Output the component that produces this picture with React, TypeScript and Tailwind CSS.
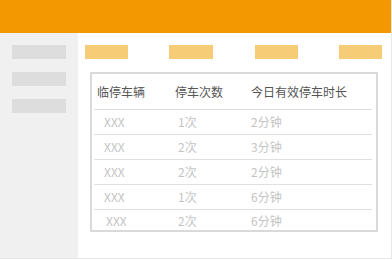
const rows = [
  { car: 'XXX', count: '1次', time: '2分钟' },
  { car: 'XXX', count: '2次', time: '3分钟' },
  { car: 'XXX', count: '2次', time: '2分钟' },
  { car: 'XXX', count: '1次', time: '6分钟' },
  { car: 'XXX', count: '2次', time: '6分钟' },
];

const font = { fontFamily: '"Noto Sans CJK SC", "Noto Sans", sans-serif' };

export default function App() {
  return (
    <div className="w-[392px] h-[260px] bg-white" style={font}>
      <div className="w-[392px] h-[259px] flex flex-col border-r border-b border-[#e8e8e8]">
        <div className="h-[33px] bg-[#f39800] shrink-0" />
        <div className="flex flex-1">
          <aside className="w-[78px] bg-[#f0f0f0] flex flex-col gap-[13px] pt-[12px] px-[12px]">
            <div className="h-[14px] bg-[#dddddd]" />
            <div className="h-[14px] bg-[#dddddd]" />
            <div className="h-[14px] bg-[#dddddd]" />
          </aside>
          <main className="flex-1 pt-[12px]">
            <div className="flex justify-between pl-[7px] pr-[9px]">
              <div className="w-[43px] h-[14px] bg-[#f7cc77]" />
              <div className="w-[44px] h-[14px] bg-[#f7cc77]" />
              <div className="w-[43px] h-[14px] bg-[#f7cc77]" />
              <div className="w-[43px] h-[14px] bg-[#f7cc77]" />
            </div>
            <div className="mt-[13px] ml-[12px] w-[288px] h-[160px] border-2 border-[#dadada]">
              <div className="ml-[2px] mr-[4px]">
                <div className="grid grid-cols-[81px_76px_1fr] items-center h-[36px] border-b border-[#dcdcdc] text-[12px] text-[#555555]">
                  <span className="pl-[3px]">临停车辆</span>
                  <span>停车次数</span>
                  <span>今日有效停车时长</span>
                </div>
                {rows.map((r, i) => (
                  <div
                    key={i}
                    className={`grid grid-cols-[81px_76px_1fr] items-center text-[12px] text-[#c4c4c4] ${
                      i < rows.length - 1 ? 'h-[25px] border-b border-[#e0e0e0]' : 'h-[22px]'
                    }`}
                  >
                    <span className={i === rows.length - 1 ? 'pl-[12px]' : 'pl-[10px]'}>{r.car}</span>
                    <span className="pl-[3px]">{r.count}</span>
                    <span>{r.time}</span>
                  </div>
                ))}
              </div>
            </div>
          </main>
        </div>
      </div>
    </div>
  );
}
